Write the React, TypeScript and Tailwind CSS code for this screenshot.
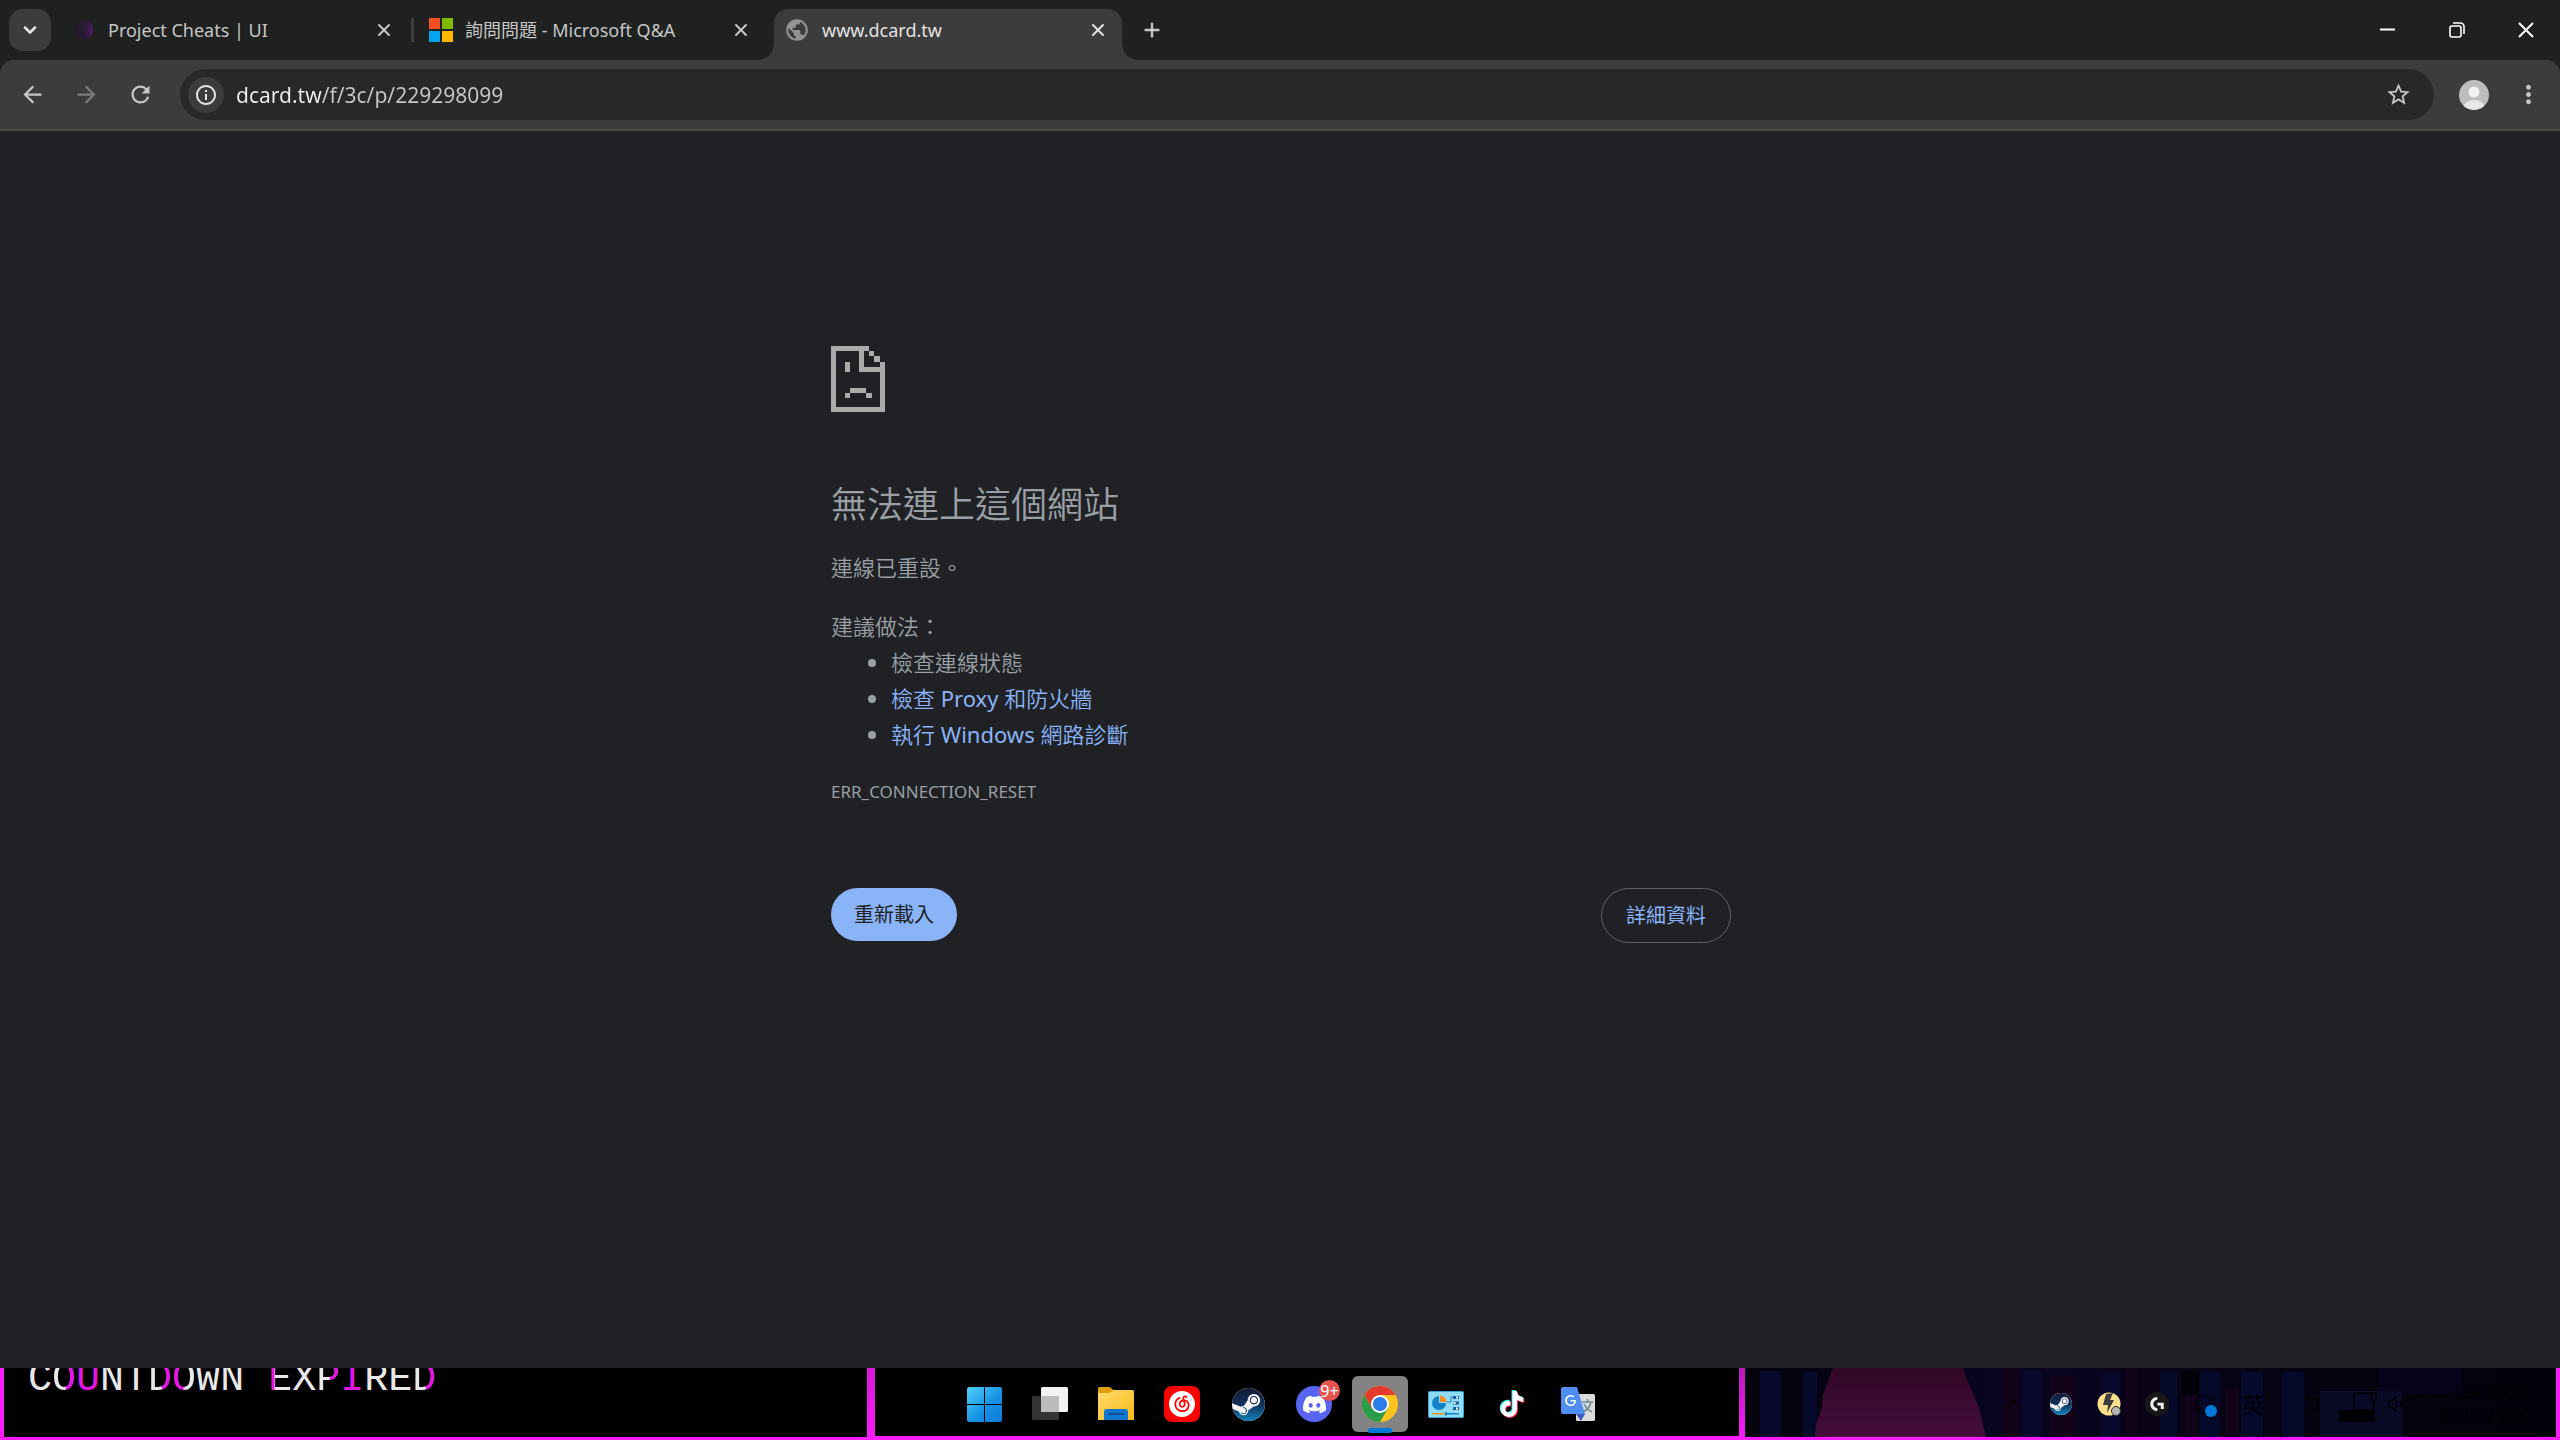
import React from 'react';
import { ChevronDown, ChevronUp, Plus, RefreshCw, Volume1, X } from 'lucide-react';
import { MdArrowBack, MdArrowForward, MdInfoOutline, MdMoreVert, MdPublic, MdRefresh, MdStarBorder } from 'react-icons/md';
import { SiDiscord, SiGoogle, SiLogitechg, SiNeteasecloudmusic, SiSteam, SiTiktok } from 'react-icons/si';

const CheatsFavicon = () => (
  <svg width="22" height="22" viewBox="0 0 22 22">
    <defs>
      <linearGradient id="orb" x1="0" x2="1">
        <stop offset="0" stopColor="#1f1c22" />
        <stop offset="0.6" stopColor="#2a1a32" />
        <stop offset="1" stopColor="#541a68" />
      </linearGradient>
    </defs>
    <circle cx="11" cy="11" r="10" fill="url(#orb)" />
    <path d="M14 3c3 2 2 4 4 6s0 5-1 6-2 3-4 3" fill="none" stroke="#3b1548" />
  </svg>
);

const MicrosoftFavicon = () => (
  <svg width="24" height="24" viewBox="0 0 24 24">
    <path fill="#f25022" d="M0 0h11v11H0z" />
    <path fill="#7fba00" d="M13 0h11v11H13z" />
    <path fill="#00a4ef" d="M0 13h11v11H0z" />
    <path fill="#ffb900" d="M13 13h11v11H13z" />
  </svg>
);

interface TabProps {
  title: string;
  icon: React.ReactNode;
  active?: boolean;
}

const Tab: React.FC<TabProps> = ({ title, icon, active }) => (
  <div
    className={
      active
        ? 'relative flex h-[51px] w-[348px] items-center self-end rounded-t-[14px] bg-[#3c3c3c] pb-[9px] pl-3 text-[#e3e3e3]'
        : 'flex h-[42px] w-[348px] items-center pl-3 text-[#c7c7c7]'
    }
  >
    {active && (
      <>
        <svg className="absolute bottom-0 -left-4" width="16" height="16" viewBox="0 0 16 16">
          <path fill="#3c3c3c" d="M16 0v16H0A16 16 0 0 0 16 0z" />
        </svg>
        <svg className="absolute -right-4 bottom-0" width="16" height="16" viewBox="0 0 16 16">
          <path fill="#3c3c3c" d="M0 0v16h16A16 16 0 0 1 0 0z" />
        </svg>
      </>
    )}
    <span className="flex w-9 shrink-0 items-center">{icon}</span>
    <span className="flex-1 truncate text-[18px] leading-6">{title}</span>
    <button aria-label={`關閉 ${title}`} className="flex w-12 shrink-0 justify-center">
      <X size={20} strokeWidth={2.4} />
    </button>
  </div>
);

const TabStrip = () => (
  <div className="flex h-[60px] items-center bg-[#1f2120] pl-[9px]">
    <button aria-label="搜尋分頁" className="mr-[9px] flex size-[42px] shrink-0 items-center justify-center rounded-[14px] bg-[#3c3c3c] text-[#e3e3e3]">
      <ChevronDown size={20} strokeWidth={3} />
    </button>
    <Tab title="Project Cheats | UI" icon={<CheatsFavicon />} />
    <div className="mx-[3px] h-6 w-[3px] bg-[#3c3e3d]" />
    <Tab title="詢問問題 - Microsoft Q&A" icon={<MicrosoftFavicon />} />
    <div className="w-[9px]" />
    <Tab title="www.dcard.tw" icon={<MdPublic size={26} className="-ml-0.5 shrink-0 text-[#939393]" />} active />
    <button aria-label="新分頁" className="ml-[9px] flex size-[42px] items-center justify-center text-[#c7c7c7]">
      <Plus size={22} strokeWidth={2.6} />
    </button>
    <div className="ml-auto flex text-white">
      <button aria-label="最小化" className="flex h-[60px] w-[69px] items-center justify-center">
        <svg width="15" height="15" viewBox="0 0 15 15"><path d="M0 6.500h15" stroke="currentColor" strokeWidth="2" /></svg>
      </button>
      <button aria-label="還原" className="flex h-[60px] w-[69px] items-center justify-center">
        <svg width="16" height="16" viewBox="0 0 16 16" fill="none" stroke="currentColor" strokeWidth="1.600">
          <rect x="1" y="4" width="11" height="11" rx="2" />
          <path d="M4 1h7.500A3.500 3.500 0 0 1 15 4.500V12" />
        </svg>
      </button>
      <button aria-label="關閉" className="flex h-[60px] w-[69px] items-center justify-center">
        <svg width="16" height="16" viewBox="0 0 16 16"><path d="M1 1l14 14M15 1L1 15" stroke="currentColor" strokeWidth="2" /></svg>
      </button>
    </div>
  </div>
);

const Toolbar = () => (
  <div className="bg-[#1f2120]">
    <div className="flex items-center gap-1.5 rounded-t-[14px] border-b-2 border-[#474747] bg-[#3c3c3c] px-2 py-[9px] text-[#c7c7c7]">
      <button aria-label="上一頁" className="flex w-12 justify-center"><MdArrowBack size={27} /></button>
      <button aria-label="下一頁" className="flex w-12 justify-center text-[#7b7b7b]"><MdArrowForward size={27} /></button>
      <button aria-label="重新載入" className="flex w-12 justify-center"><MdRefresh size={27} /></button>
      <div className="mx-2.5 flex h-[51px] flex-1 items-center rounded-full bg-[#282828] pr-[22px] pl-2">
        <button aria-label="網站資訊" className="flex size-9 shrink-0 items-center justify-center rounded-full bg-[#3c3c3c] text-[#e3e3e3]">
          <MdInfoOutline size={24} />
        </button>
        <input
          aria-label="網址"
          defaultValue="dcard.tw/f/3c/p/229298099"
          className="ml-3 min-w-0 flex-1 bg-[linear-gradient(to_right,#f0f0f0_85px,#c7c7c7_85px)] bg-clip-text text-[21px] leading-7 text-transparent outline-none"
        />
        <button aria-label="加入書籤"><MdStarBorder size={27} /></button>
      </div>
      <button aria-label="使用者" className="flex w-12 justify-center">
        <svg width="30" height="30" viewBox="0 0 30 30">
          <clipPath id="avatar"><circle cx="15" cy="15" r="15" /></clipPath>
          <g clipPath="url(#avatar)">
            <path fill="#bdbdbd" d="M0 0h30v30H0z" />
            <circle cx="15" cy="12" r="5.500" fill="#f1f1f1" />
            <ellipse cx="15" cy="28" rx="11" ry="8" fill="#e6e6e6" />
          </g>
        </svg>
      </button>
      <button aria-label="選單" className="flex w-12 justify-center"><MdMoreVert size={29} /></button>
    </div>
  </div>
);

const ErrorPage = () => (
  <main className="flex-1 bg-[#202124] pt-[215px] text-[#9aa0a6]">
    <div className="mx-auto max-w-[902px] pl-0.5 text-[22px] leading-9 font-[350]">
      <svg width="54" height="66" viewBox="0 0 54 66" fill="#ababab" shapeRendering="crispEdges">
        <path d="M0 0h38v5H33v16h16v-5h5v50H0zM5 5v56h44V26H28V5z" fillRule="evenodd" />
        <path d="M38 5h5v5h-5zM43 10h6v6h-6zM14 16h5v10h-5zM19 42h16v5H19zM14 47h5v5h-5zM35 47h6v5h-6z" />
      </svg>
      <h1 className="mt-[69px] text-[36px] leading-12">無法連上這個網站</h1>
      <p className="mt-5">連線已重設。</p>
      <p className="mt-[23px]">建議做法：</p>
      <ul className="list-disc pl-15 marker:text-[#9aa0a6]">
        <li>檢查連線狀態</li>
        <li><a href="#proxy" className="text-[#8ab4f8]">檢查 <span className="font-normal">Proxy</span> 和防火牆</a></li>
        <li><a href="#diagnose" className="text-[#8ab4f8]">執行 <span className="font-normal">Windows</span> 網路診斷</a></li>
      </ul>
      <div className="mt-6 text-[17px] leading-8 font-normal">ERR_CONNECTION_RESET</div>
      <div className="mt-20 flex items-start justify-between text-[20px] leading-[29px] font-normal">
        <button className="rounded-full bg-[#8ab4f8] px-[23px] py-3 text-[#202124]">重新載入</button>
        <button className="rounded-full border border-[#5f6368] px-6 py-[12px] text-[#8ab4f8]">詳細資料</button>
      </div>
    </div>
  </main>
);

const white = 'text-[#e8e8e8]';
const pink = 'text-[#e516e5]';
const pinkRight = 'bg-[linear-gradient(to_right,#e8e8e8_55%,#e516e5_60%)] bg-clip-text text-transparent';
const pinkLeft = 'bg-[linear-gradient(to_right,#e516e5_45%,#e8e8e8_55%)] bg-clip-text text-transparent';
const pinkStem = 'bg-[linear-gradient(to_right,#e516e5_25%,#e8e8e8_30%)] bg-clip-text text-transparent';

const countdown = [
  ['C', white], ['O', pinkRight], ['U', pink], ['N', white], ['T', white], ['D', pinkRight], ['O', pinkLeft], ['W', white], ['N', white],
  [' ', white],
  ['E', pinkStem], ['X', white], ['P', pinkRight], ['I', pink], ['R', white], ['E', white], ['D', pinkRight],
];

// desktop wallpaper, visible through the transparent taskbar
const Wallpaper = () => (
  <div className="absolute inset-0 grid grid-cols-[867fr_8px_864fr_6px_815fr] bg-black">
    <div className="overflow-hidden border-b-[3px] border-l-4 border-[#fb1bfb] pl-6">
      <div className="-mt-3 font-['Liberation_Mono',monospace] text-[40px] leading-12 whitespace-pre">
        {countdown.map(([char, color], i) => (
          <span key={i} className={color}>{char}</span>
        ))}
      </div>
    </div>
    <div className="bg-linear-to-b from-[#d61ad6] to-[#fb1bfb]" />
    <div className="border-b-4 border-[#fb1bfb]" />
    <div className="bg-linear-to-b from-[#b81ab8] to-[#fb1bfb]" />
    <div className="h-[72px] border-r-4 border-b-[3px] border-[#fb1bfb]">
      <svg className="block size-full" viewBox="0 0 811 69" preserveAspectRatio="none">
        <defs>
          <linearGradient id="mound" x1="0" y1="0" x2="0" y2="1">
            <stop offset="0" stopColor="#310826" />
            <stop offset="1" stopColor="#440d3c" />
          </linearGradient>
          <linearGradient id="night" x1="0" x2="1">
            <stop offset="0" stopColor="#05020d" />
            <stop offset="0.35" stopColor="#080522" />
            <stop offset="0.5" stopColor="#0a0318" />
            <stop offset="0.7" stopColor="#050310" />
            <stop offset="1" stopColor="#030109" />
          </linearGradient>
        </defs>
        <path fill="url(#night)" d="M0 0h811v69H0z" />
        <path fill="#08082c" d="M15 3h21v66H15zM277 3h20v66h-20zM356 4h19v65h-19z" />
        <path fill="#05092a" d="M58 4h14v65H58zM415 4h17v65h-17zM455 4h20v65h-20zM496 4h22v65h-22zM537 4h22v65h-22z" />
        <path fill="#12031a" d="M258 0h16v69h-16zM305 8h26v61h-26zM380 0h12v69h-12zM440 8h12v61h-12zM480 20h14v49h-14z" />
        <path fill="#030109" d="M436 3h18v24h-18z" />
        <path fill="#05041b" d="M634 0h82v25h-82z" />
        <path fill="#0a0a27" d="M575 23h82v46h-82z" />
        <path fill="#010004" d="M593 42h37v12h-37z" />
        <path fill="url(#mound)" d="M88 0h130l3 10 4 8 4 10 4 9 3 10 2 10 3 12H70l1-12 3-9 3-10 1-11 4-11 4-11z" />
      </svg>
    </div>
  </div>
);

const SteamIcon = ({ size }: { size: number }) => (
  <span className="rounded-full bg-[linear-gradient(#f4f4f4,#f4f4f4)] bg-clip-content p-px">
    <svg width="0" height="0" className="absolute">
      <linearGradient id="steam" x1="0" y1="0" x2="0" y2="1">
        <stop offset="0" stopColor="#141a33" />
        <stop offset="0.5" stopColor="#12305c" />
        <stop offset="1" stopColor="#0f83b8" />
      </linearGradient>
    </svg>
    <SiSteam size={size} fill="url(#steam)" />
  </span>
);

const StartIcon = () => (
  <svg width="35" height="35" viewBox="0 0 35 35">
    <defs>
      <linearGradient id="start" x1="0" y1="0" x2="1" y2="1">
        <stop offset="0" stopColor="#4fd0fa" />
        <stop offset="0.6" stopColor="#1490e4" />
        <stop offset="1" stopColor="#0f7bd6" />
      </linearGradient>
    </defs>
    <path fill="url(#start)" d="M1.500 0H17v17H0V1.500zM18 0h15.500L35 1.500V17H18zM0 18h17v17H1.500L0 33.500zM18 18h17v15.500L33.500 35H18z" />
  </svg>
);

const TaskViewIcon = () => (
  <svg width="36" height="34" viewBox="0 0 36 34">
    <rect x="0" y="9" width="27" height="24" rx="1.500" fill="#343434" />
    <rect x="9" y="0" width="27" height="25" rx="1.500" fill="#f3f3f3" />
    <path fill="#bcbcbc" d="M9 9h18v16H9z" />
  </svg>
);

const FolderIcon = () => (
  <svg width="36" height="34" viewBox="0 0 36 34">
    <defs>
      <linearGradient id="folder" x1="0" y1="0" x2="1" y2="1">
        <stop offset="0" stopColor="#ffdc70" />
        <stop offset="1" stopColor="#f9b915" />
      </linearGradient>
    </defs>
    <path fill="#e0a00c" d="M0 1.500A1.500 1.500 0 0 1 1.500 0H11c2 0 3 3 5 3v6H0z" />
    <path fill="url(#folder)" d="M0 6h11c2 0 3-3 5-3h18.500A1.500 1.500 0 0 1 36 4.500V33H0z" />
    <path fill="#0f77cf" d="M6 33v-8a3 3 0 0 1 3-3h18a3 3 0 0 1 3 3v8z" />
    <path d="M11 27h14" stroke="#0a4f93" strokeWidth="2" strokeLinecap="round" />
  </svg>
);

const ChromeIcon = () => (
  <svg width="36" height="36" viewBox="0 0 48 48">
    <circle cx="24" cy="24" r="24" fill="#fcc31e" />
    <path fill="#2a9d4a" d="M3.200 12A24 24 0 0 0 24 48l10.400-18L24 24l-10.400 6z" />
    <path fill="#e33b2e" d="M24 12h20.800A24 24 0 0 0 3.200 12l10.400 18L24 24z" />
    <circle cx="24" cy="24" r="12" fill="#fff" />
    <circle cx="24" cy="24" r="9.500" fill="#2b7de9" />
  </svg>
);

const ControlPanelIcon = () => (
  <svg width="36" height="27" viewBox="0 0 36 27">
    <rect x="0.500" y="0.500" width="35" height="26" rx="1" fill="#8fdcf7" stroke="#3aa6d8" />
    <path fill="#1283c8" d="M11 12h7a7 7 0 1 1-7-7z" />
    <path fill="#f78f1e" d="M12 11V4.500a6.500 6.500 0 0 1 6.500 6.500z" />
    <path d="M19 11h4V6h3" fill="none" stroke="#2a7fb0" />
    <path fill="#1a5f94" d="M25 5h6v3h-6zM25 10.500h6v3h-6zM25 16h6v3h-6z" />
    <path fill="#fff" d="M28 5.500h2v2h-2zM25.500 11h2v2h-2zM28 16.500h2v2h-2z" />
    <path fill="#f78f1e" d="M4 22h13v1.500H4z" />
    <path fill="#1283c8" d="M19 22h12v1.500H19zM17 21h2v3.500h-2z" />
  </svg>
);

const TikTokIcon = () => (
  <span className="relative size-[26px]">
    <SiTiktok size={26} className="absolute -top-px -left-px text-[#25f4ee]" />
    <SiTiktok size={26} className="absolute top-px left-px text-[#fe2c55]" />
    <SiTiktok size={26} className="absolute inset-0 text-white" />
  </span>
);

const TranslateIcon = () => (
  <span className="relative">
    <svg width="35" height="35" viewBox="0 0 35 35">
      <rect x="15" y="7" width="19" height="27" rx="1.500" fill="#dcdcdc" />
      <path d="M21 15h11M26.500 12v3M30 15c-1 5-4 8-8 10M23 17c2 4 4 6 8 8" fill="none" stroke="#6f8a92" strokeWidth="1.600" />
      <path fill="#3a5bb8" d="M15 27h9l-4 7z" />
      <path fill="#4f8ef5" d="M2 0h14l8 27H2a2 2 0 0 1-2-2V2a2 2 0 0 1 2-2z" />
    </svg>
    <SiGoogle size={11} className="absolute top-2 left-1 text-white" />
  </span>
);

const DiscordIcon = () => (
  <span className="relative flex size-9 items-center justify-center rounded-full bg-[#5865f2]">
    <SiDiscord size={23} className="text-white" />
    <span className="absolute -top-1.5 -right-2 flex size-[21px] items-center justify-center rounded-full bg-[#e5534f] text-[16px] leading-5 text-white">9+</span>
  </span>
);

const apps = [
  { name: '開始', icon: <StartIcon /> },
  { name: '工作檢視', icon: <TaskViewIcon /> },
  { name: '檔案總管', icon: <FolderIcon /> },
  {
    name: '網易雲音樂',
    icon: (
      <span className="flex size-9 items-center justify-center rounded-lg bg-[#fd0000] text-white">
        <SiNeteasecloudmusic size={26} />
      </span>
    ),
  },
  { name: 'Steam', icon: <SteamIcon size={33} /> },
  { name: 'Discord', icon: <DiscordIcon /> },
  { name: 'Google Chrome', icon: <ChromeIcon />, active: true },
  { name: '控制台', icon: <ControlPanelIcon /> },
  { name: 'TikTok', icon: <TikTokIcon /> },
  { name: 'Google 翻譯', icon: <TranslateIcon /> },
];

const Tray = () => (
  <div className="flex items-center justify-end pr-[29px] text-black">
    <button aria-label="顯示隱藏的圖示" className="flex w-12 justify-center"><ChevronUp size={26} strokeWidth={1.500} /></button>
    <button aria-label="Steam" className="flex w-12 justify-center"><SteamIcon size={22} /></button>
    <button aria-label="電源" className="flex w-12 justify-center">
      <svg width="24" height="24" viewBox="0 0 24 24">
        <circle cx="12" cy="12" r="11.500" fill="#fbe08d" />
        <path fill="#3d3d3d" d="M9 2l7-1-3 7h4l-7 13 1-8H6z" />
        <circle cx="19" cy="19" r="4.500" fill="#b5b5b5" stroke="#2b2b2b" />
      </svg>
    </button>
    <button aria-label="Logitech G HUB" className="flex w-12 justify-center">
      <span className="flex size-6 items-center justify-center rounded-full bg-[#181818] text-[#f2f2f2]"><SiLogitechg size={14} /></span>
    </button>
    <button aria-label="Windows Update" className="relative flex w-12 justify-center">
      <RefreshCw size={24} strokeWidth={1.200} />
      <span className="absolute right-3 -bottom-px size-3 rounded-full bg-[#0078d7]" />
    </button>
    <button className="w-12 text-[22px] leading-7">英</button>
    <button className="w-[70px] text-[20px] leading-7">ㄅ</button>
    <button aria-label="網路" className="flex w-9 justify-center">
      <svg width="24" height="24" viewBox="0 0 24 24" fill="none" stroke="currentColor" strokeWidth="1.500">
        <path d="M16 1H3a2 2 0 0 0-2 2v13a2 2 0 0 0 2 2h17v5" />
        <path d="M18 1h5v6a2 2 0 0 1-5 0zM20.500 9v9" />
      </svg>
    </button>
    <button aria-label="音量" className="flex w-7 justify-center"><Volume1 size={20} strokeWidth={1.500} /></button>
    <div className="w-[120px] text-right text-[17px] leading-6">
      <div>上午 04:55</div>
      <div>2025/11/30</div>
    </div>
  </div>
);

const Taskbar = () => (
  <footer className="relative h-[72px]">
    <Wallpaper />
    <div className="relative grid h-full grid-cols-[1fr_auto_1fr]">
      <div />
      <nav className="flex items-center gap-2.5 pl-0.5">
        {apps.map((app) => (
          <button
            key={app.name}
            aria-label={app.name}
            className={
              app.active
                ? 'relative flex size-14 items-center justify-center rounded-md bg-[#838383]'
                : 'flex size-14 items-center justify-center'
            }
          >
            {app.icon}
            {app.active && <span className="absolute -bottom-px h-[5px] w-6 rounded-full bg-[#0078d7]" />}
          </button>
        ))}
      </nav>
      <Tray />
    </div>
  </footer>
);

export default function App() {
  return (
    <div className="flex min-h-screen flex-col bg-[#202124] font-['Noto_Sans','Noto_Sans_CJK_TC',sans-serif]">
      <header>
        <TabStrip />
        <Toolbar />
      </header>
      <ErrorPage />
      <Taskbar />
    </div>
  );
}
